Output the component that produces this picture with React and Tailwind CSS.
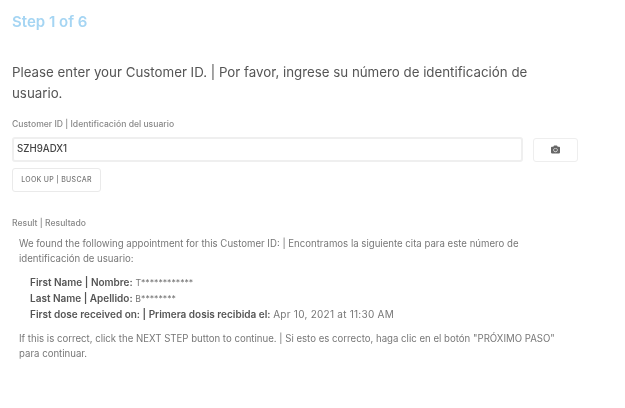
import React from "react";
import { FaCamera } from "react-icons/fa";

const App = () => {
  return (
    <div className="w-[625px] h-[408px] bg-white overflow-hidden font-['Inter','Liberation_Sans',sans-serif] text-[#555] px-3 pt-[12px] blur-[0.35px]">
      <h2 className="text-[15px] leading-[20px] font-semibold text-[#a5d5f3]">Step 1 of 6</h2>

      <p className="mt-[30px] w-[560px] text-[13.3px] leading-[21px] text-[#555]">
        Please enter your Customer ID. | Por favor, ingrese su número de identificación de usuario.
      </p>

      <label className="block mt-[15px] text-[8.6px] leading-[11px] font-medium text-[#888]">
        Customer ID | Identificación del usuario
      </label>

      <div className="flex items-center mt-[7px]">
        <div className="w-[511px] h-[25px] border-2 border-[#efefef] rounded-[3px] px-[3px] flex items-center text-[9.7px] font-medium text-[#444]">
          SZH9ADX1
        </div>
        <button className="ml-[10px] w-[45px] h-[24px] border border-[#eee] rounded-[3px] flex items-center justify-center">
          <FaCamera size={9} className="text-[#666]" />
        </button>
      </div>

      <button className="mt-[6px] w-[89px] h-[24px] border border-[#eaeaea] rounded-[3px] text-[7px] font-medium tracking-[0.3px] text-[#777]">
        LOOK UP | BUSCAR
      </button>

      <div className="mt-[26px] text-[8.6px] leading-[11px] font-medium text-[#888]">Result | Resultado</div>

      <div className="mt-[7px] pl-[7px] w-[552px] text-[9.65px] leading-[15px] text-[#777]">
        <p>
          We found the following appointment for this Customer ID: | Encontramos la siguiente cita para este número de identificación de usuario:
        </p>
        <div className="mt-[9px] pl-[11px]">
          <p><b className="text-[10px] font-semibold text-[#555]">First Name | Nombre:</b> <span className="text-[8.7px]">T************</span></p>
          <p><b className="text-[10px] font-semibold text-[#555]">Last Name | Apellido:</b> <span className="text-[8.7px]">B********</span></p>
          <p><b className="text-[10px] font-semibold text-[#555]">First dose received on: | Primera dosis recibida el:</b> <span className="text-[10px] tracking-[0.25px]">Apr 10, 2021 at 11:30 AM</span></p>
        </div>
        <p className="mt-[9px]">
          If this is correct, click the NEXT STEP button to continue. | Si esto es correcto, haga clic en el botón "PRÓXIMO PASO" para continuar.
        </p>
      </div>
    </div>
  );
};

export default App;
